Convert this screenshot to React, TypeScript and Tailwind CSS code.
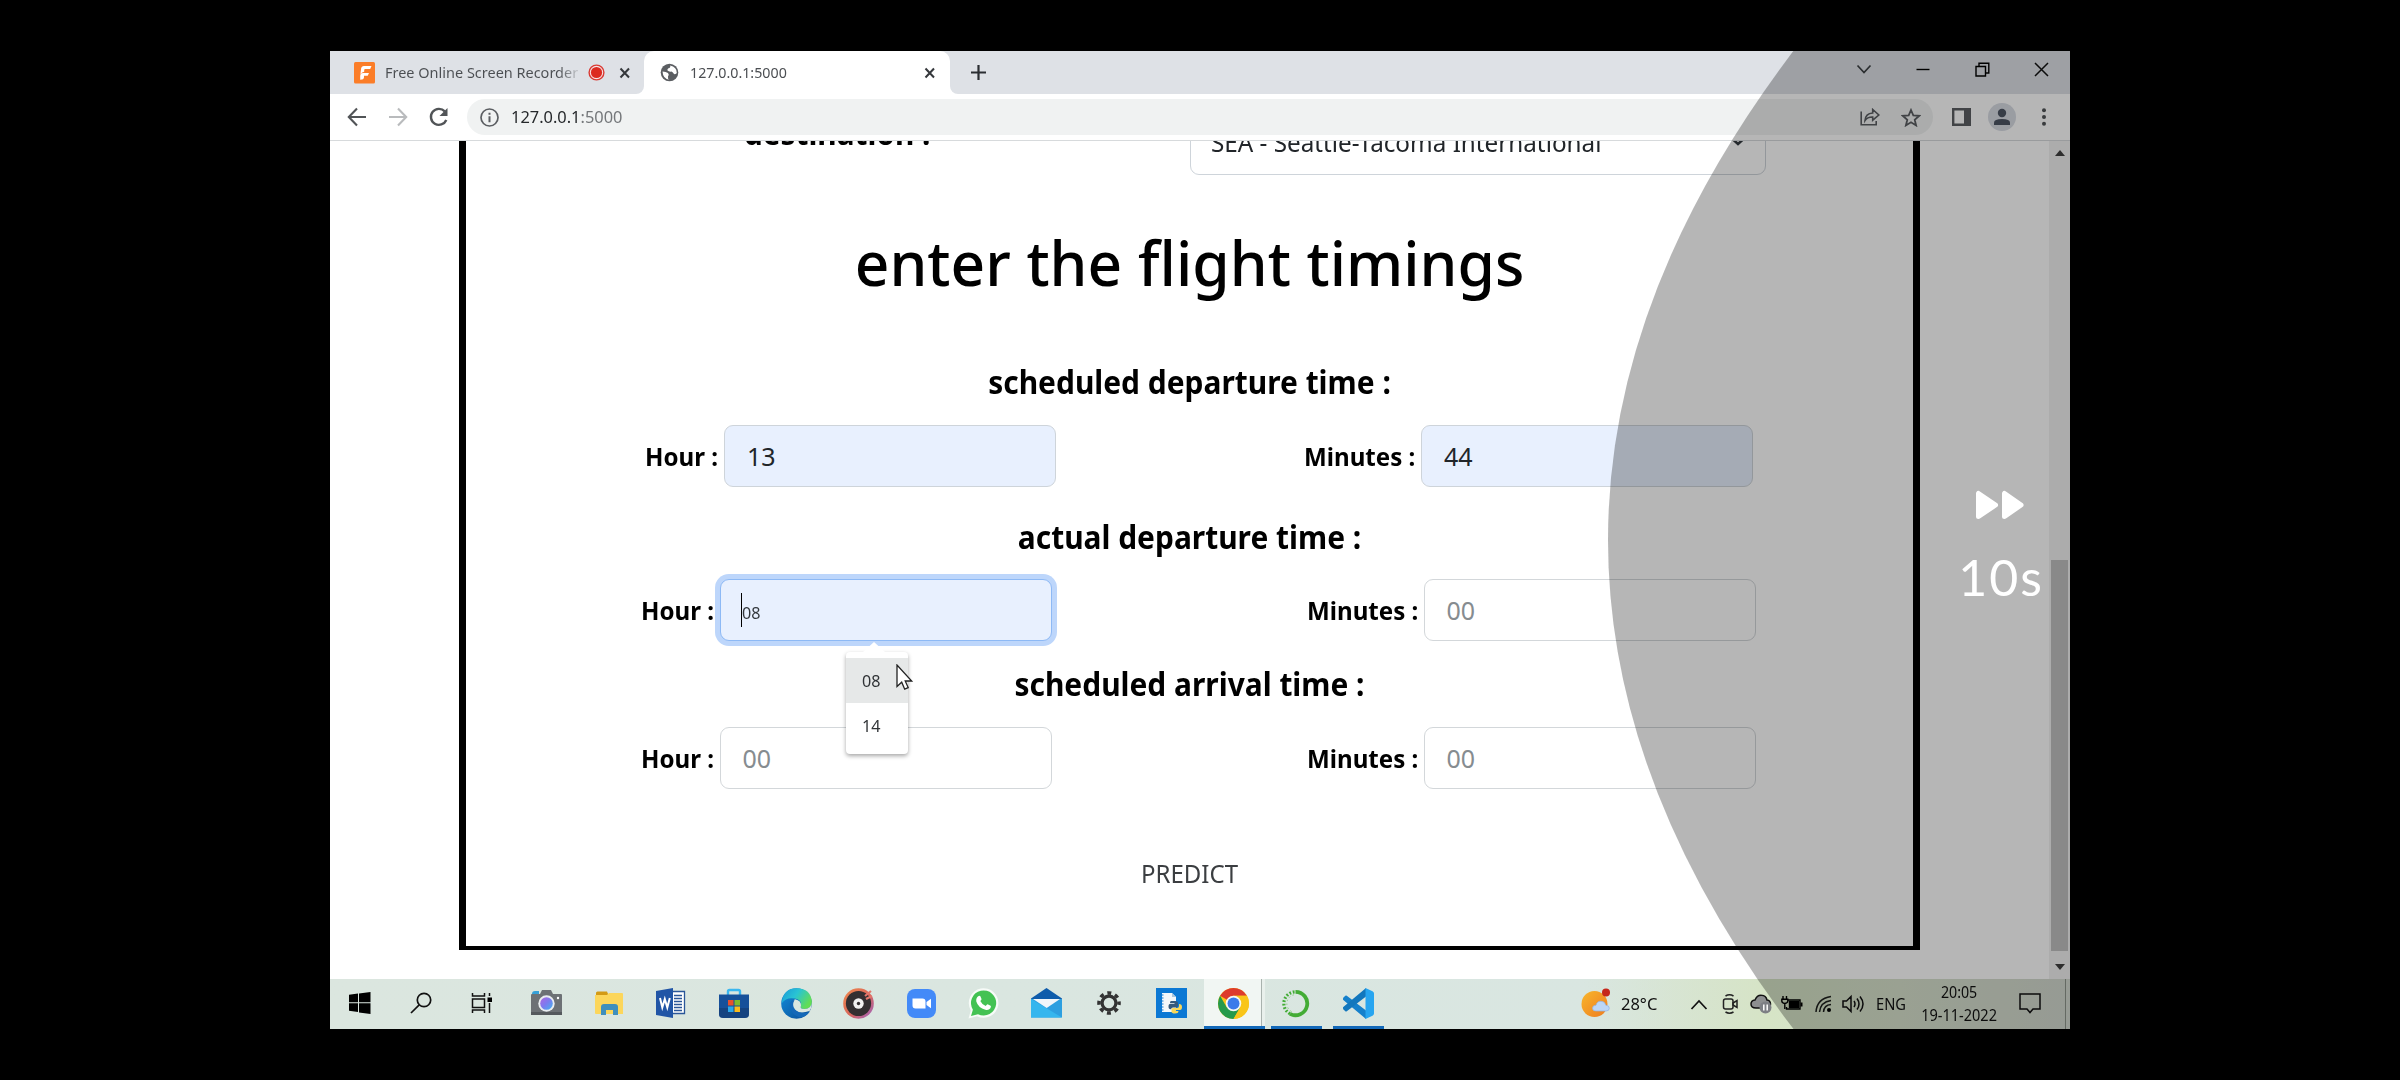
import React from 'react';

type Kids = { children?: React.ReactNode };

/* ---------- browser chrome ---------- */

function TabStrip() {
  return (
    <div className="flex h-[43px] bg-[#dee1e6]">
      <div className="relative flex w-[314px] items-center pl-6">
        <svg width="21" height="22" viewBox="0 0 21 22">
          <rect width="21" height="21.500" rx="1.500" fill="#fb7d28" />
          <path d="M7 7.500Q7 4 10 4H17.500l-1.300 3h-5q-1 0-1 1v1.800Q8.200 10 6.400 12zM6.200 17.800V14q0-3 3-3H15l-1.300 2.800H10v1.500q0 2.500-3.800 2.500z" fill="#fff" />
        </svg>
        <div className="mb-[2px] ml-[10px] w-[193px] overflow-hidden whitespace-nowrap text-[15px] leading-6 text-[#4b4e52]">
          <span className="inline-block origin-left scale-x-[0.965] bg-gradient-to-r from-[#4b4e52] from-90% to-[#c5c8cc] bg-clip-text text-transparent">
            Free Online Screen Recorder
          </span>
        </div>
        <svg className="ml-[10px]" width="17" height="17" viewBox="0 0 17 17">
          <circle cx="8.500" cy="8.500" r="7.400" fill="#f6e3e4" stroke="#d93a34" strokeWidth="1.400" />
          <circle cx="8.500" cy="8.500" r="5.600" fill="#dc2a20" />
        </svg>
        <svg className="ml-[14px]" width="12" height="12" viewBox="0 0 12 12" stroke="#35383c" strokeWidth="2">
          <path d="M1.500 1.500l8.500 9M10 1.500l-8.500 9" />
        </svg>
        <div className="absolute bottom-0 right-0 h-2 w-2 bg-white" />
        <div className="absolute bottom-0 right-0 h-2 w-2 rounded-br-[8px] bg-[#dee1e6]" />
      </div>
      <div className="flex w-[306px] items-center rounded-t-[10px] bg-white pl-4">
        <svg width="19" height="19" viewBox="0 0 19 19">
          <circle cx="9.500" cy="9.500" r="8.800" fill="#5b5e62" />
          <path d="M2.500 8.500q3.500 0 5.500 1.500 1.500 1.500 0 3.500-.5 2.500 1.500 3.200-6.500-.5-7-8.200zM10 2.500q1 1-.500 2.500-2.500.5-2 2.500 1.500 1.500 4 1 1.500.5 2.500 2.500 2 .5 2.800-1Q17 4 10 2.500z" fill="#fff" />
        </svg>
        <div className="mb-[2px] ml-[11px] w-[238px] text-[15px] leading-6 text-[#4b4e52]">
          <span className="inline-block origin-left scale-x-[0.95]">127.0.0.1:5000</span>
        </div>
        <svg className="-ml-1 shrink-0" width="12" height="12" viewBox="0 0 12 12" stroke="#35383c" strokeWidth="2">
          <path d="M1.500 1.500l8.500 9M10 1.500l-8.500 9" />
        </svg>
      </div>
      <div className="relative flex flex-1 items-center pl-[20px]">
        <div className="absolute bottom-0 left-0 h-2 w-2 bg-white" />
        <div className="absolute bottom-0 left-0 h-2 w-2 rounded-bl-[8px] bg-[#dee1e6]" />
        <svg width="17" height="17" viewBox="0 0 17 17" stroke="#2b2e32" strokeWidth="2.200">
          <path d="M8.500 1v15M1 8.500h15" />
        </svg>
      </div>
      <div className="flex items-center pb-[7px] pr-[21px]">
        <svg width="16" height="12" viewBox="0 0 16 12" fill="none" stroke="#3c4043" strokeWidth="1.700">
          <path d="M1.500 2.500L8 9.500l6.500-7" />
        </svg>
        <svg className="ml-[44px]" width="14" height="14" viewBox="0 0 14 14" stroke="#000" strokeWidth="1.400">
          <path d="M.5 7.500h13" />
        </svg>
        <svg className="ml-[45px]" width="15" height="15" viewBox="0 0 15 15" fill="none" stroke="#000" strokeWidth="1.400">
          <path d="M1 4.500h9.500V14H1zM4 4V1.200h9.800V11H11" />
        </svg>
        <svg className="ml-[44px]" width="15" height="15" viewBox="0 0 15 15" stroke="#111" strokeWidth="1.500">
          <path d="M1 1l13 13M14 1L1 14" />
        </svg>
      </div>
    </div>
  );
}

function Toolbar() {
  return (
    <div className="flex h-[47px] items-center border-b border-[#d7dadc] bg-white">
      <svg className="ml-[17px]" width="20" height="20" viewBox="0 0 20 20" fill="none" stroke="#515457" strokeWidth="2.100">
        <path d="M19 10H2M10 1.500L1.800 10l8.200 8.500" />
      </svg>
      <svg className="ml-[21px]" width="20" height="20" viewBox="0 0 20 20" fill="none" stroke="#b9bbbd" strokeWidth="2.100">
        <path d="M1 10h17M10 1.500l8.200 8.500-8.200 8.500" />
      </svg>
      <svg className="ml-[21px]" width="20" height="20" viewBox="0 0 20 20" fill="none" stroke="#515457" strokeWidth="2.400">
        <path d="M17.300 13a8 8 0 1 1-1.500-8.600" />
        <path d="M18.500 1v8h-8z" fill="#515457" stroke="none" />
      </svg>
      <div className="ml-[18px] flex h-[36px] w-[1466px] items-center rounded-full bg-[#f0f2f2] pl-[13px] pr-[12px]">
        <svg width="19" height="19" viewBox="0 0 19 19">
          <circle cx="9.500" cy="9.500" r="8.500" fill="none" stroke="#5b5e62" strokeWidth="1.700" />
          <path d="M8.500 8.300h2v6h-2zM8.500 4.700h2v2h-2z" fill="#5b5e62" />
        </svg>
        <div className="ml-[12px] flex-1 text-[17px] leading-7 text-[#74777a]">
          <span className="inline-block origin-left scale-x-[0.965]">
            <span className="text-[#25282b]">127.0.0.1</span>:5000
          </span>
        </div>
        <svg width="20" height="18" viewBox="0 0 20 18" fill="none" stroke="#5b5e62" strokeWidth="1.600">
          <path d="M1.200 3.500v13.300h15V13" />
          <path d="M5 12.500q.500-7 7.700-7.500V1.500L18.800 7l-6.100 5.200V9Q7.500 8.800 5 12.500z" />
        </svg>
        <svg className="ml-[21px]" width="20" height="19" viewBox="0 0 20 19" fill="none" stroke="#5b5e62" strokeWidth="1.800">
          <path d="M10 2l2.300 5.300 5.900.5-4.500 3.900 1.400 5.700L10 14.300l-5.100 3.100 1.400-5.700-4.500-3.900 5.900-.5z" />
        </svg>
      </div>
      <svg className="ml-[19px]" width="19" height="18" viewBox="0 0 19 18">
        <path d="M1.200 1.200h16.600v15.600H1.200z" fill="none" stroke="#5b5e62" strokeWidth="2.400" />
        <path d="M12 1h6v16h-6z" fill="#5b5e62" />
      </svg>
      <svg className="ml-[17px]" width="28" height="28" viewBox="0 0 28 28">
        <circle cx="14" cy="14" r="14" fill="#d8dce4" />
        <circle cx="14" cy="10" r="4.200" fill="#4e5664" />
        <path d="M6 22v-2.500q0-3.500 8-3.500t8 3.500V22z" fill="#4e5664" />
      </svg>
      <svg className="ml-[25px]" width="6" height="18" viewBox="0 0 6 18" fill="#515457">
        <circle cx="3" cy="2.200" r="2" />
        <circle cx="3" cy="9" r="2" />
        <circle cx="3" cy="15.800" r="2" />
      </svg>
    </div>
  );
}

/* ---------- form ---------- */

function Heading({ children, className }: Kids & { className: string }) {
  return (
    <h3 className={`${className} scale-x-[0.935] whitespace-nowrap text-center text-[32px] font-bold leading-[44px] text-black`}>
      {children}
    </h3>
  );
}

function Field({ label, labelWidth, children, focused, filled }: Kids & { label: string; labelWidth: string; focused?: boolean; filled?: boolean }) {
  const box = focused
    ? 'border-[#8db9f5] bg-[#e8f0fe] ring-[5px] ring-[#bdd6fb]'
    : filled
      ? 'border-[#ced4da] bg-[#e8f0fe] text-[#212529]'
      : 'border-[#d3d7da] bg-white text-[#868c90]';
  return (
    <div className="flex items-center justify-center gap-[6px]">
      <label className={`${labelWidth} whitespace-nowrap text-[25px] font-bold leading-9 text-black`}>
        <span className="inline-block origin-left scale-x-[0.965]">{label}</span>
      </label>
      <div className={`${box} flex h-[62px] w-[332px] items-center rounded-[9px] border-[1.500px] pl-[22px] text-[25px] leading-9`}>{children}</div>
    </div>
  );
}

function Row({ className, hour, minutes, focused, filled }: { className: string; hour: React.ReactNode; minutes: React.ReactNode; focused?: boolean; filled?: boolean }) {
  return (
    <div className={`${className} grid shrink-0 grid-cols-2 self-center`}>
      <Field label="Hour :" labelWidth="w-[73px]" focused={focused} filled={filled}>{hour}</Field>
      <Field label="Minutes :" labelWidth="w-[111px]" filled={filled}>{minutes}</Field>
    </div>
  );
}

function FormPage() {
  return (
    <div className="flex h-[838px] bg-white">
      <div className="flex-1">
        <div className="ml-[129px] flex h-[809px] w-[1461px] flex-col border-x-[7px] border-b-[4px] border-black">
          <div className="flex h-[34px] shrink-0 items-end overflow-hidden">
            <div className="mb-[22px] ml-[278px] w-[186px] whitespace-nowrap text-[32px] font-bold leading-[40px] text-black">
              <span className="inline-block origin-left scale-x-[0.93]">destination :</span>
            </div>
            <div className="ml-[260px] flex h-[61px] w-[576px] shrink-0 items-center justify-between rounded-[9px] border-[1.500px] border-[#ced4da] pb-[3px] pl-[20px] pr-[20px] text-[25px] text-[#212529]">
              <span className="inline-block origin-left scale-x-[0.97] whitespace-nowrap">SEA - Seattle-Tacoma International</span>
              <svg className="mb-[3px]" width="14" height="9" viewBox="0 0 14 9" fill="none" stroke="#343a40" strokeWidth="2.600">
                <path d="M1 1.500l6 5.500 6-5.500" />
              </svg>
            </div>
          </div>
          <h1 className="mt-[45px] scale-x-[0.975] text-center text-[62px] font-medium leading-[84px] text-black">enter the flight timings</h1>
          <Heading className="mt-[56px]">scheduled departure time :</Heading>
          <Row className="mt-[21px] w-[1356px]" hour="13" minutes="44" filled />
          <Heading className="mt-[28px]">actual departure time :</Heading>
          <Row
            className="mt-[20px] w-[1370px] -translate-x-px"
            focused
            hour={
              <>
                <span className="-ml-[2px] h-[34px] w-[1.500px] bg-black" />
                <span className="mt-[5px] inline-block origin-left scale-x-[0.95] text-[17px] text-[#33383d]">08</span>
              </>
            }
            minutes="00"
          />
          <Heading className="mt-[21px]">scheduled arrival time :</Heading>
          <Row className="mt-[21px] w-[1370px] -translate-x-px" hour="00" minutes="00" />
          <div className="mt-[66px] text-center text-[25px] leading-9 text-[#3b3e41]">
            <span className="inline-block scale-x-[0.96]">PREDICT</span>
          </div>
        </div>
      </div>
      <div className="flex w-[21px] flex-col items-center bg-[#f1f1f1]">
        <svg className="mt-[9px] shrink-0" width="10" height="6" viewBox="0 0 10 6" fill="#404040"><path d="M5 0l5 6H0z" /></svg>
        <div className="mt-[404px] h-[391px] w-[17px] bg-[#c1c1c1]" />
        <svg className="mt-[13px] shrink-0" width="10" height="6" viewBox="0 0 10 6" fill="#404040"><path d="M0 0h10L5 6z" /></svg>
      </div>
    </div>
  );
}

function Suggestions() {
  return (
    <div className="absolute left-[516px] top-[591px] w-[62px]">
      <svg className="ml-[16px] block" width="24" height="10" viewBox="0 0 24 10"><path d="M1 10L12 0l11 10z" fill="#fff" /></svg>
      <div className="h-[102px] rounded-[4px] bg-white pt-[6px] text-[17px] text-[#303336] shadow-[0_2px_4px_rgba(0,0,0,0.35)]">
        <div className="h-[45px] bg-[#e6e8e8] pl-[16px] leading-[45px]"><span className="inline-block origin-left scale-x-[0.95]">08</span></div>
        <div className="h-[46px] pl-[16px] leading-[46px]"><span className="inline-block origin-left scale-x-[0.95]">14</span></div>
      </div>
    </div>
  );
}

/* ---------- taskbar ---------- */

function Cell({ children, className = 'w-[62.500px]' }: Kids & { className?: string }) {
  return <div className={`relative flex shrink-0 items-center justify-center pb-[2px] ${className}`}>{children}</div>;
}

function Taskbar() {
  return (
    <div className="relative flex h-[50px] bg-gradient-to-r from-[#dbe6df] from-0% via-[#d9e6e1] via-75% to-[#d3dad0] to-100%">
      <div className="-ml-px flex">
        <Cell className="w-[61px]">
          <svg width="22" height="22" viewBox="0 0 22 22" fill="#000"><path d="M0 2.700l9-1.200v8.700H0zM10 1.400L21.500 0v10.200H10zM0 11.300h9V20l-9-1.200zM10 11.300h11.500V22L10 20.400z" /></svg>
        </Cell>
        <Cell className="w-[61px]">
          <svg width="22" height="22" viewBox="0 0 22 22" fill="none" stroke="#111" strokeWidth="1.700"><circle cx="14" cy="8" r="6.700" /><path d="M9.200 12.800L1 21" /></svg>
        </Cell>
        <Cell className="w-[61px]">
          <svg width="22" height="22" viewBox="0 0 22 22" fill="none" stroke="#111" strokeWidth="1.500"><path d="M1.500 1v3h12V1M1.500 7h12v8.500h-12zM1.500 21v-3h12v3M18.500 1v3M18.500 11v10" /><path d="M16.500 5.500h4.500v4.500h-4.500z" fill="#000" stroke="none" /></svg>
        </Cell>
      </div>
      <Cell className="ml-[3px] w-[62.500px]">
        <svg width="31" height="26" viewBox="0 0 31 26">
          <path d="M1 4q0-3 3-3h4v5H1z" fill="#35a0d8" />
          <path d="M1 4h8l2-4h9l2 4h8q1 0 1 1v20H0V5q0-1 1-1z" fill="#6d7175" />
          <path d="M0 22h31v3H0z" fill="#55595d" />
          <circle cx="15.500" cy="13.500" r="8.200" fill="#e9edf0" />
          <circle cx="15.500" cy="13.500" r="6.300" fill="url(#lens)" />
          <circle cx="27" cy="8" r="1.200" fill="#fff" />
          <defs><linearGradient id="lens" x1="0" y1="0" x2="1" y2="1"><stop offset="0" stopColor="#b065e0" /><stop offset=".5" stopColor="#7a7cf0" /><stop offset="1" stopColor="#3fb6ee" /></linearGradient></defs>
        </svg>
      </Cell>
      <Cell>
        <svg width="28" height="25" viewBox="0 0 28 25">
          <path d="M1 4V2q0-1.500 1.500-1.500H12L13.500 4z" fill="#d39a16" />
          <path d="M0 4h12l2-2h13q1 0 1 1v20H1q-1 0-1-1z" fill="#fcd65b" />
          <path d="M6 24v-8q0-3 3-3h11q3 0 3 3v8h-5v-5h-7v5z" fill="#3f8fbd" />
        </svg>
      </Cell>
      <Cell>
        <svg width="30" height="30" viewBox="0 0 30 30">
          <path d="M15 3.500h13.500v22H15z" fill="#fff" stroke="#2a5699" strokeWidth="1.300" />
          <path d="M18 7.500h8M18 10.500h8M18 13.500h8M18 16.500h8M18 19.500h8M18 22.500h8" stroke="#2a5699" strokeWidth="1.500" />
          <path d="M0 3l17-3v30L0 27z" fill="#2155a6" />
          <path d="M4 10l2.300 9.500L8.800 11l2.500 8.500L13.800 10" fill="none" stroke="#fff" strokeWidth="2" />
        </svg>
      </Cell>
      <Cell>
        <svg width="30" height="31" viewBox="0 0 30 31">
          <path d="M9 9V3.500Q9 2 10.500 2h9Q21 2 21 3.500V9" fill="none" stroke="#3bb7ef" strokeWidth="2.400" />
          <path d="M0 6.500h30V26q0 4-4 4H4q-4 0-4-4z" fill="#16509a" />
          <path d="M0 20h30v6q0 4-4 4H4q-4 0-4-4z" fill="#153a70" opacity=".6" />
          <path d="M9 12h5.500v5.500H9z" fill="#e8512c" /><path d="M15.500 12H21v5.500h-5.500z" fill="#7fba2e" />
          <path d="M9 18.500h5.500V24H9z" fill="#2aa7ea" /><path d="M15.500 18.500H21V24h-5.500z" fill="#fcbc1c" />
        </svg>
      </Cell>
      <Cell>
        <svg width="31" height="31" viewBox="0 0 31 31">
          <defs>
            <linearGradient id="edgeTop" x1="0" y1="0" x2="1" y2=".5"><stop offset="0" stopColor="#1a98d8" /><stop offset=".5" stopColor="#29c4d4" /><stop offset="1" stopColor="#62dd55" /></linearGradient>
            <linearGradient id="edgeLow" x1="0" y1="0" x2="1" y2="1"><stop offset="0" stopColor="#1490dd" /><stop offset="1" stopColor="#0a4a95" /></linearGradient>
          </defs>
          <circle cx="15.500" cy="15.500" r="15.300" fill="url(#edgeLow)" />
          <path d="M1 13Q3 .3 15.500.2 30 .5 30.900 14q0 7-7.400 7-5-.3-3.500-3.300 1-6-6-7.200Q5 9 1 15z" fill="url(#edgeTop)" />
          <path d="M14 11.200q-5 3-2 8.800 5 7 16.500 3l2-3.500V14q0 7-7 7-5 0-3.500-3.300.500-5.200-6-6.500z" fill="#dae6e0" />
          <path d="M9 15q-1 11 10 14.500 6-.500 9.500-5.500-9 3-14.500-2.500-3.500-4-.5-9.500Q10 12 9 15z" fill="#1468b8" />
        </svg>
      </Cell>
      <Cell>
        <svg width="31" height="31" viewBox="0 0 31 31">
          <defs><linearGradient id="groove" x1="0" y1="0" x2="1" y2="1"><stop offset="0" stopColor="#f0884a" /><stop offset=".55" stopColor="#d8665c" /><stop offset="1" stopColor="#9a62c8" /></linearGradient></defs>
          <circle cx="15.500" cy="15.500" r="15.300" fill="url(#groove)" />
          <circle cx="15.500" cy="15.500" r="12.600" fill="#332f31" />
          <circle cx="15.500" cy="15.500" r="5.200" fill="#f1f1f1" />
          <circle cx="15.500" cy="15.500" r="1.700" fill="#332f31" />
          <path d="M22 8l6-5M23 11l6-3" stroke="#e2776c" strokeWidth="2.200" />
        </svg>
      </Cell>
      <Cell>
        <svg width="29" height="29" viewBox="0 0 29 29">
          <rect width="29" height="29" rx="8" fill="#438af8" />
          <path d="M5.500 9.500h10q3 0 3 3v7h-10q-3 0-3-3zM19.500 13l4.500-3.300v9.600L19.500 16z" fill="#fff" />
        </svg>
      </Cell>
      <Cell>
        <svg width="31" height="31" viewBox="0 0 31 31">
          <path d="M.5 30.500l2.300-8A14.800 14.800 0 1 1 9 28.300z" fill="#f7fbf8" />
          <path d="M3 28l1.900-6.300A12.600 12.600 0 1 1 10 26.300z" fill="#43c253" />
          <path d="M10.200 8.200q1.600-1 2.300.3l1 2.500q.2.800-1.200 2 1.700 3.500 5.400 5 1.300-1.800 1.900-1.700l3 1.500q.8.500-.2 2.400-1.800 2.400-5 1.500-7.200-2-9.100-8.300-.5-3.500 1.900-5.200z" fill="#fff" />
        </svg>
      </Cell>
      <Cell>
        <svg width="31" height="30" viewBox="0 0 31 30">
          <path d="M0 10.500L15.500 0 31 10.500V14H0z" fill="#0f5cab" />
          <path d="M0 11h31v18.500H0z" fill="#2d9fe0" />
          <path d="M0 11l31 18.500H0z" fill="#35b6ee" />
          <path d="M2 11h27L15.700 20z" fill="#f1f6fa" />
        </svg>
      </Cell>
      <Cell>
        <svg width="24" height="24" viewBox="0 0 24 24">
          <circle cx="12" cy="12" r="10" fill="none" stroke="#333" strokeWidth="3.600" strokeDasharray="3.930 3.924" strokeDashoffset="1.960" />
          <circle cx="12" cy="12" r="6.900" fill="none" stroke="#333" strokeWidth="3.200" />
        </svg>
      </Cell>
      <Cell>
        <svg width="31" height="30" viewBox="0 0 31 30">
          <path d="M0 0h31v30H0z" fill="#0b78d4" />
          <path d="M6 5h10l4 4v15H6z" fill="#f3f7fa" />
          <path d="M16 5v4h4z" fill="#a9c6dd" />
          <path d="M6 7h1.500M6 10h1.500M6 13h1.500M6 16h1.500M6 19h1.500M6 22h1.500" stroke="#0b78d4" />
          <path d="M15 13h4.500q2.500 0 2.500 2.300v2.200q0 2-2 2h-3q-1.800 0-1.800 1.800h-.700q-2 0-2-2.800t2-2.800h4V15H14q0-1.800 1-2z" fill="#35597c" />
          <path d="M23 16q3 0 3 3t-2 3h-4v1h2.500q0 2.500-3.500 2.500t-3.500-2V21q0-1 2-1h3.500q2 0 2-2z" fill="#f8d75a" />
        </svg>
      </Cell>
      <Cell className="ml-px w-[58px] bg-[#f1f6f3] pl-[2px]">
        <svg width="31" height="31" viewBox="0 0 31 31">
          <circle cx="15.500" cy="15.500" r="15.500" fill="#f9c519" />
          <path d="M15.500 15.500L2.080 7.750A15.500 15.500 0 0 1 28.920 7.750H15.500z" fill="#dd3b2d" />
          <path d="M2.080 7.750A15.500 15.500 0 0 0 15.500 31l6.700-11.600-6.700-3.900-6.700 3.900z" fill="#259a4b" />
          <path d="M15.500 7.750h13.420A15.500 15.500 0 0 1 15.500 31l6.700-11.600z" fill="#f9c519" />
          <circle cx="15.500" cy="15.500" r="7.750" fill="#f5f8f6" />
          <circle cx="15.500" cy="15.500" r="6" fill="#3a7bea" />
        </svg>
        <div className="absolute bottom-0 left-0 h-[3px] w-[61px] bg-[#1268b8]" />
        <div className="absolute left-[57px] top-0 h-[47px] w-1 border-l border-[#a9b2ae] bg-[#e9f0ec]" />
      </Cell>
      <Cell className="ml-[3px] w-[62.500px]">
        <svg width="29" height="29" viewBox="0 0 29 29" fill="none">
          <path d="M14.500 2.800A11.700 11.700 0 1 1 9 24.800" stroke="#43ac35" strokeWidth="3.800" />
          <path d="M9 24.800A11.700 11.700 0 0 1 14.500 2.800" stroke="#43ac35" strokeWidth="3.200" strokeDasharray="1.800 1.700" />
          <path d="M10.500 22.500A9 9 0 0 1 13 5.800" stroke="#8acb80" strokeWidth="1" strokeDasharray="1.500 2.500" />
        </svg>
        <div className="absolute bottom-0 left-[6px] h-[3px] w-[51px] bg-[#1268b8]" />
      </Cell>
      <Cell>
        <svg width="31" height="31" viewBox="0 0 31 31">
          <path d="M0 10l2.300-2.200q.8-.5 1.500 0L23 22.500V31L.3 12q-.8-1 0-2z" fill="#1580cb" />
          <path d="M0 21l2.300 2.200q.8.500 1.500 0L23 8.500V0L.3 19q-.8 1 0 2z" fill="#1277bd" />
          <path d="M22.500 0l7 3.300q1.500.8 1.500 2.200v20q0 1.500-1.500 2.200l-7 3.300z" fill="#27a5f0" />
        </svg>
        <div className="absolute bottom-0 left-[6px] h-[3px] w-[51px] bg-[#1268b8]" />
      </Cell>
      <Tray />
    </div>
  );
}

function Tray() {
  return (
    <div className="ml-auto flex items-center bg-[linear-gradient(90deg,transparent,#d6e4c6_38%,#d8e2cd_65%,#d3d9d0)] text-[17px] text-[#111]">
      <svg className="-ml-[1px] mb-[2px]" width="30" height="30" viewBox="0 0 30 30">
        <defs><linearGradient id="sun" x1="0" y1="0" x2="1" y2="1"><stop offset="0" stopColor="#f8b62c" /><stop offset="1" stopColor="#ee7c20" /></linearGradient></defs>
        <circle cx="13.500" cy="16" r="13" fill="url(#sun)" />
        <circle cx="25" cy="4.500" r="4" fill="#c5271b" />
        <path d="M15 23q-3.500 0-3.500-2.800 0-3 3.500-3 1-4.200 5-4 4 .2 4.800 4 3.500.2 3.500 3 0 2.800-3.300 2.800z" fill="#bcd6f6" stroke="#8fb3e6" strokeWidth=".7" />
      </svg>
      <div className="ml-[10px] w-[38px] whitespace-nowrap"><span className="inline-block origin-left scale-x-[0.97]">28°C</span></div>
      <svg className="ml-[31px]" width="18" height="11" viewBox="0 0 18 11" fill="none" stroke="#111" strokeWidth="1.700"><path d="M1.500 10L9 2l7.500 8" /></svg>
      <svg className="ml-[14px]" width="17" height="22" viewBox="0 0 17 22" fill="none" stroke="#222" strokeWidth="1.500">
        <rect x="1.500" y="6" width="9.500" height="10" rx="2" /><path d="M11 10l4-2.500v7L11 12zM3.500 3q4-2.500 8 0M3.500 19q4 2.500 8 0" />
      </svg>
      <svg className="ml-[11px]" width="22" height="20" viewBox="0 0 22 20">
        <path d="M6 14Q1 14 1 10q0-3.500 4-4 2-5 6.500-4.700Q16 1.500 17 6q3.500.5 3.500 4T17 14z" fill="#8d8f90" stroke="#111" strokeWidth="1.500" />
        <circle cx="15.500" cy="13.500" r="6" fill="#7d7f84" /><path d="M13.800 10.500v6M17.200 10.500v6" stroke="#fff" strokeWidth="1.500" />
      </svg>
      <svg className="ml-[9px]" width="22" height="16" viewBox="0 0 22 16" fill="none" stroke="#000" strokeWidth="1.400">
        <path d="M7 4h12v9H5.500V11" /><path d="M8.500 5.500h9v6h-9z" fill="#000" /><path d="M20.500 6.500v4" strokeWidth="2" />
        <path d="M2 0v3M5.500 0v3M.8 3.200h6V5q0 2-3 2.500-3-.5-3-2.500zM3.800 7.500V13" />
      </svg>
      <svg className="ml-[12px]" width="18" height="18" viewBox="0 0 18 18" fill="none" stroke="#1d1f1c" strokeWidth="1.500">
        <path d="M1 17Q2 3.500 16 1.500M4.500 17Q5.500 7 16 5.500M8.500 17q.5-7 7.500-7.500" /><circle cx="14" cy="15" r="2" fill="#000" stroke="none" />
      </svg>
      <svg className="ml-[9px]" width="23" height="20" viewBox="0 0 23 20" fill="none" stroke="#111" strokeWidth="1.500">
        <path d="M1 7h3.500L9 2.500v15L4.500 13H1zM12 7q2 3 0 6M15 4.500q4 5.500 0 11M18 2.500q6 7.500 0 15" />
      </svg>
      <div className="mb-px ml-[11px] w-[28px] whitespace-nowrap"><span className="inline-block origin-left scale-x-[0.89] text-[16.500px]">ENG</span></div>
      <div className="mb-[2px] ml-[17px] flex w-[76px] flex-col items-center whitespace-nowrap text-[16.500px] leading-[23px]">
        <span className="inline-block scale-x-[0.86]">20:05</span>
        <span className="inline-block scale-x-[0.88]">19-11-2022</span>
      </div>
      <svg className="mb-px ml-[22px]" width="22" height="21" viewBox="0 0 22 21" fill="none" stroke="#111" strokeWidth="1.500"><path d="M1 1h20v15h-7l-3 3.500L8 16H1z" /></svg>
      <div className="ml-[24px] mr-[4px] h-full w-px bg-[#8d958b]" />
    </div>
  );
}

/* ---------- player overlay ---------- */

function SeekOverlay() {
  return (
    <>
      <svg className="pointer-events-none absolute left-0 top-0" width="2400" height="1080" viewBox="0 0 2400 1080">
        <path d="M1834 0Q1382 540 1834 1080H2400V0z" fill="#000" fillOpacity=".286" />
      </svg>
      <div className="absolute left-[1950px] top-[489px] flex w-[102px] flex-col items-center text-white">
        <svg className="-ml-[3px]" width="49" height="32" viewBox="0 0 49 32" fill="#fff" stroke="#fff" strokeWidth="5" strokeLinejoin="round">
          <path d="M3.500 4.500v23L20.500 16zM29.500 4.500v23L46 16z" />
        </svg>
        <div className="mt-[24px] whitespace-nowrap font-[Lato] text-[50px] leading-[64px] tracking-[2px]">10s</div>
      </div>
    </>
  );
}

export default function App() {
  return (
    <div className="relative flex h-[1080px] w-[2400px] justify-center overflow-hidden bg-black pt-[51px] font-['Noto_Sans',sans-serif]">
      <div className="relative flex h-[978px] w-[1740px] flex-col overflow-hidden bg-white">
        <TabStrip />
        <Toolbar />
        <FormPage />
        <Taskbar />
        <Suggestions />
        <svg className="absolute left-[566px] top-[613px]" width="18" height="27" viewBox="0 0 18 27">
          <path d="M1 1v21.500l4.700-4.300 3 7 3.500-1.600-3-6.600h6.500z" fill="#fff" stroke="#222" strokeWidth="1.300" />
        </svg>
      </div>
      <SeekOverlay />
    </div>
  );
}
